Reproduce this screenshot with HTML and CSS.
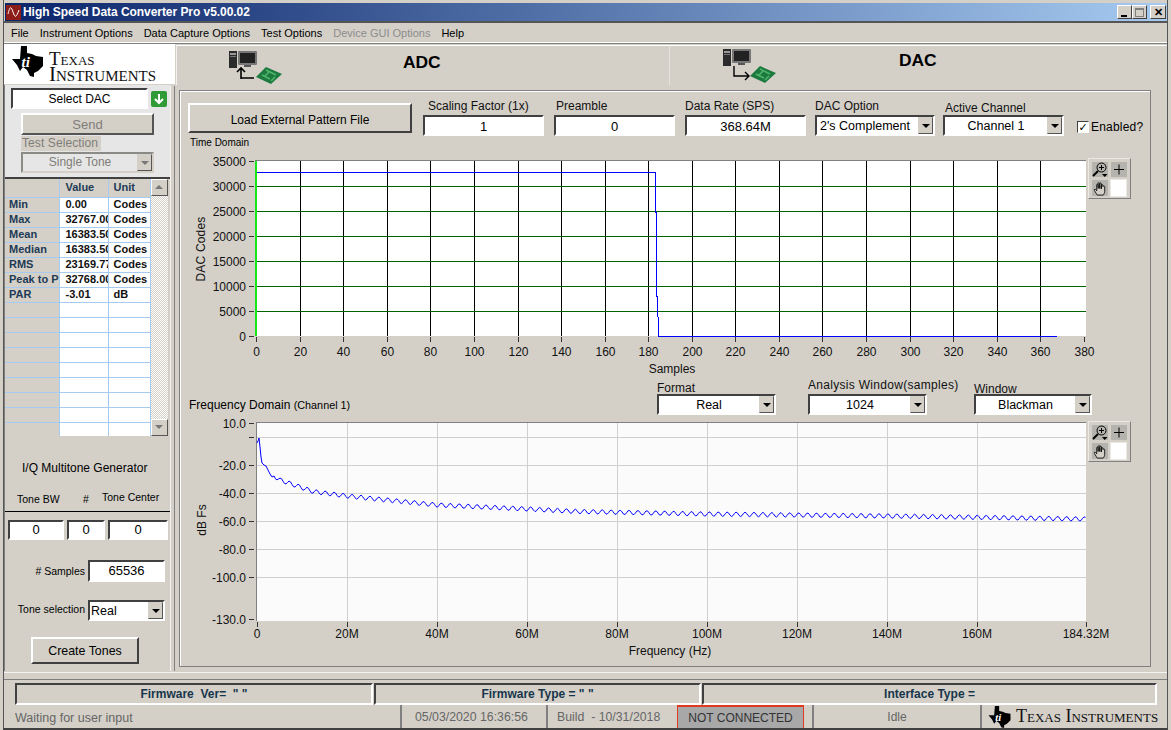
FILE: index.html
```html
<!DOCTYPE html>
<html lang="en">

<head>
    <meta charset="UTF-8">
    <title>High Speed Data Converter Pro v5.00.02</title>
    <link rel="stylesheet" href="styles.css">
</head>

<body>
    <svg class="iconDefs" width="0" height="0">
        <symbol id="tiState" viewBox="0 0 31 31">
            <path d="M9 0 L15 0 L15 7 L20 8 L24 10 L31 11 L31 20 L26 25 L22 27 L22 31 L18 30 L15 24 L11 21 L8 25 L5 19 L0 13 L8 13 Z" />
            <text class="tiMark" x="9.5" y="21">ti</text>
        </symbol>
        <symbol id="zoomIcon" viewBox="0 0 16 15">
            <circle cx="9.5" cy="5.5" r="4.5" fill="none" stroke="#000" />
            <path d="M9.5 3 V8 M7 5.5 H12" stroke="#000" />
            <path d="M6 9 L1 14" stroke="#000" stroke-width="2" />
            <path d="M10 12 H15.5 L12.7 15 Z" fill="#000" />
        </symbol>
        <symbol id="plusIcon" viewBox="0 0 16 15">
            <path d="M8 2.5 V12.5 M3 7.5 H13" stroke="#000" fill="none" />
        </symbol>
        <symbol id="handIcon" viewBox="0 0 14 16">
            <path d="M4 15 C3 13 0.5 10 1 9 C1.7 8.3 3 9.5 3.5 10.5 L3.5 4 C3.5 3 5 3 5 4 L5 8 L5 2.5 C5 1.5 6.7 1.5 6.7 2.5 L6.7 8 L6.7 3 C6.7 2 8.4 2 8.4 3 L8.4 8.5 L8.4 4.5 C8.4 3.5 10 3.5 10 4.5 L10 6 C10 5 12 5 12 6 L12 11 C12 13 11 14 10.5 15 Z" fill="#d4d0c8" stroke="#000" stroke-width="0.9" />
        </symbol>
        <symbol id="pcIcon" viewBox="0 0 28 17">
            <rect x="0" y="0" width="8" height="17" fill="#2b2b2b" />
            <rect x="1" y="2" width="6" height="2" fill="#999" />
            <rect x="1" y="5" width="6" height="1" fill="#777" />
            <rect x="9" y="0" width="19" height="14" rx="1" fill="#777" />
            <rect x="11" y="2" width="15" height="10" fill="#222" />
            <rect x="15" y="14" width="7" height="2" fill="#555" />
        </symbol>
        <symbol id="boardIcon" viewBox="0 0 26 17">
            <path d="M10 0 L26 7 L15 17 L0 10 Z" fill="#1c7a3e" />
            <path d="M10 3 L20 8 M6 8 L14 12 M13 5 L8 10 M19 10 L15 14" stroke="#4fb56c" stroke-width="1.5" />
        </symbol>
    </svg>

    <div class="window">
        <div class="titleBar">
            <svg class="appIcon" viewBox="0 0 15 15">
                <rect width="15" height="15" fill="#8c1d18" />
                <path d="M2 9 C4 1 5 1 7 7 C9 13 10 13 13 5" fill="none" stroke="#fff" />
            </svg>
            <span class="titleText">High Speed Data Converter Pro v5.00.02</span>
            <div class="winButtons">
                <button class="winBtn"><span class="minGlyph"></span></button>
                <button class="winBtn"><span class="maxGlyph"></span></button>
                <button class="winBtn closeBtn">&#10005;</button>
            </div>
        </div>

        <div class="menuBar">
            <span>File</span>
            <span>Instrument Options</span>
            <span>Data Capture Options</span>
            <span>Test Options</span>
            <span class="disabled">Device GUI Options</span>
            <span>Help</span>
        </div>

        <div class="headerRow">
            <div class="logoBox">
                <svg class="logoState"><use href="#tiState" /></svg>
                <div class="logoText">
                    <div class="logoTexas">Texas</div>
                    <div class="logoInst">Instruments</div>
                </div>
            </div>
            <div class="tab adcTab">
                <div class="tabIcon">
                    <svg class="pc" viewBox="0 0 28 17"><use href="#pcIcon" /></svg>
                    <svg class="tabArrow" viewBox="0 0 20 13">
                        <path d="M5 12 V2 M1 5 L5 1 L9 5 M5 11 H18" fill="none" stroke="#000" stroke-width="1.6" />
                    </svg>
                    <svg class="board" viewBox="0 0 26 17"><use href="#boardIcon" /></svg>
                </div>
                <span class="tabLabel">ADC</span>
            </div>
            <div class="tab dacTab">
                <div class="tabIcon">
                    <svg class="pc" viewBox="0 0 28 17"><use href="#pcIcon" /></svg>
                    <svg class="tabArrow" viewBox="0 0 20 13">
                        <path d="M2 0 V10 H17 M13 6 L17 10 L13 14" fill="none" stroke="#000" stroke-width="1.4" />
                    </svg>
                    <svg class="board" viewBox="0 0 26 17"><use href="#boardIcon" /></svg>
                </div>
                <span class="tabLabel">DAC</span>
            </div>
        </div>

        <div class="mainRow">
            <div class="sideBar">
                <div class="sideTop">
                    <div class="selectDacRow">
                        <div class="field selectDac">Select DAC</div>
                        <svg class="goIcon" viewBox="0 0 16 16">
                            <rect width="16" height="16" rx="2" fill="#2f9a36" />
                            <path d="M8 3 V12 M4 8 L8 12 L12 8" fill="none" stroke="#fff" stroke-width="2" />
                        </svg>
                    </div>
                    <button class="btn sendBtn">Send</button>
                    <div class="testLabel">Test Selection</div>
                    <div class="select greyed">
                        <span class="selectValue">Single Tone</span>
                        <span class="selectArrow"></span>
                    </div>
                </div>

                <div class="statsBox">
                    <table class="stats">
                        <colgroup>
                            <col class="colName">
                            <col class="colValue">
                            <col class="colUnit">
                        </colgroup>
                        <tr class="headRow"><th></th><th>Value</th><th>Unit</th></tr>
                        <tr><th>Min</th><td>0.00</td><td>Codes</td></tr>
                        <tr><th>Max</th><td>32767.00</td><td>Codes</td></tr>
                        <tr><th>Mean</th><td>16383.50</td><td>Codes</td></tr>
                        <tr><th>Median</th><td>16383.50</td><td>Codes</td></tr>
                        <tr><th>RMS</th><td>23169.77</td><td>Codes</td></tr>
                        <tr><th>Peak to P</th><td>32768.00</td><td>Codes</td></tr>
                        <tr><th>PAR</th><td>-3.01</td><td>dB</td></tr>
                        <tr><th></th><td></td><td></td></tr>
                        <tr><th></th><td></td><td></td></tr>
                        <tr><th></th><td></td><td></td></tr>
                        <tr><th></th><td></td><td></td></tr>
                        <tr><th></th><td></td><td></td></tr>
                        <tr><th></th><td></td><td></td></tr>
                        <tr><th></th><td></td><td></td></tr>
                        <tr><th></th><td></td><td></td></tr>
                        <tr><th></th><td></td><td></td></tr>
                    </table>
                    <div class="scrollBar">
                        <span class="scrollBtn"><i class="upGlyph"></i></span>
                        <span class="scrollBtn"><i class="downGlyph"></i></span>
                    </div>
                </div>

                <div class="toneTitle">I/Q Multitone Generator</div>
                <div class="toneHeads">
                    <span class="toneBw">Tone BW</span>
                    <span class="toneNum">#</span>
                    <span class="toneCenter">Tone Center</span>
                </div>
                <div class="toneFields">
                    <div class="field toneF1">0</div>
                    <div class="field toneF2">0</div>
                    <div class="field toneF3">0</div>
                </div>
                <div class="toneRow samplesRow">
                    <span class="toneRowLabel">#&nbsp;Samples</span>
                    <div class="field toneInput">65536</div>
                </div>
                <div class="toneRow selectionRow">
                    <span class="toneRowLabel">Tone selection</span>
                    <div class="select toneInput">
                        <span class="selectValue alignLeft">Real</span>
                        <span class="selectArrow"></span>
                    </div>
                </div>
                <button class="btn createBtn">Create Tones</button>
            </div>

            <div class="splitter"></div>

            <div class="panel">
                <div class="controlRow">
                    <button class="btn loadBtn">Load External Pattern File</button>
                    <div class="ctl ctlScale">
                        <label>Scaling Factor (1x)</label>
                        <div class="field">1</div>
                    </div>
                    <div class="ctl ctlPre">
                        <label>Preamble</label>
                        <div class="field">0</div>
                    </div>
                    <div class="ctl ctlRate">
                        <label>Data Rate (SPS)</label>
                        <div class="field">368.64M</div>
                    </div>
                    <div class="ctl ctlOption">
                        <label>DAC Option</label>
                        <div class="select">
                            <span class="selectValue alignLeft">2's Complement</span>
                            <span class="selectArrow"></span>
                        </div>
                    </div>
                    <div class="ctl ctlChannel">
                        <label>Active Channel</label>
                        <div class="select">
                            <span class="selectValue">Channel 1</span>
                            <span class="selectArrow"></span>
                        </div>
                    </div>
                    <div class="enabledBox">
                        <span class="checkBox">&#10003;</span>
                        <span class="enabledText">Enabled?</span>
                    </div>
                </div>

                <div class="timeLabel">Time Domain</div>
                <div class="chartWrap">
                    <svg id="timeChart" class="chart" viewBox="186 150 960 232" width="960" height="232"></svg>
                    <div class="palette timePalette">
                        <span class="palBtn"><svg><use href="#zoomIcon" /></svg></span>
                        <span class="palBtn palOn"><svg><use href="#plusIcon" /></svg></span>
                        <span class="palBtn"><svg><use href="#handIcon" /></svg></span>
                        <span class="palBlank"></span>
                    </div>
                </div>

                <div class="freqRow">
                    <div class="freqTitle">Frequency Domain <small>(Channel 1)</small></div>
                    <div class="ctl ctlFormat">
                        <label>Format</label>
                        <div class="select">
                            <span class="selectValue">Real</span>
                            <span class="selectArrow"></span>
                        </div>
                    </div>
                    <div class="ctl ctlAnalysis">
                        <label>Analysis Window(samples)</label>
                        <div class="select">
                            <span class="selectValue">1024</span>
                            <span class="selectArrow"></span>
                        </div>
                    </div>
                    <div class="ctl ctlWindow">
                        <label>Window</label>
                        <div class="select">
                            <span class="selectValue">Blackman</span>
                            <span class="selectArrow"></span>
                        </div>
                    </div>
                </div>

                <div class="chartWrap">
                    <svg id="freqChart" class="chart" viewBox="186 415 960 250" width="960" height="250"></svg>
                    <div class="palette freqPalette">
                        <span class="palBtn"><svg><use href="#zoomIcon" /></svg></span>
                        <span class="palBtn palOn"><svg><use href="#plusIcon" /></svg></span>
                        <span class="palBtn"><svg><use href="#handIcon" /></svg></span>
                        <span class="palBlank"></span>
                    </div>
                </div>
            </div>
        </div>

        <div class="hSplitter"></div>

        <div class="firmwareRow">
            <div class="fwBox fw1">Firmware&nbsp; Ver=&nbsp; " "</div>
            <div class="fwBox fw2">Firmware Type = " "</div>
            <div class="fwBox fw3">Interface Type =</div>
        </div>

        <div class="statusRow">
            <span class="stWait">Waiting for user input</span>
            <span class="stCell stDate">05/03/2020 16:36:56</span>
            <span class="stCell stBuild">Build&nbsp; - 10/31/2018</span>
            <span class="stConn">NOT CONNECTED</span>
            <span class="stCell stIdle">Idle</span>
            <span class="stCell stLogo">
                <svg class="logoSmall"><use href="#tiState" /></svg>
                <span class="logoLine">Texas Instruments</span>
            </span>
        </div>
    </div>

    <script src="chart.js"></script>
</body>

</html>
```

FILE: styles.css
```css
* {
    margin: 0;
    padding: 0;
    box-sizing: border-box;
    font-family: "Liberation Sans", Arial, sans-serif;
}

html,
body {
    width: 1171px;
    height: 730px;
    overflow: hidden;
    background-color: #d4d0c8;
}

.iconDefs {
    display: block;
    height: 0;
}

.tiMark {
    font: italic bold 15px "Liberation Serif", serif;
    fill: #fff;
}

.window {
    display: flex;
    flex-direction: column;
    width: 1165px;
    height: 730px;
    margin-left: 3px;
    padding-top: 3px;
    border-left: 1px solid #555;
    border-right: 1px solid #555;
    border-bottom: 2px solid #404040;
}

/* title bar */
.titleBar {
    display: flex;
    align-items: center;
    height: 18px;
    margin: 0 0 0 1px;
    padding: 0 1px 0 1px;
    background: linear-gradient(to right, #0a246a, #a6caf0);
    flex: none;
}

.appIcon {
    width: 15px;
    height: 15px;
    margin-right: 2px;
}

.titleText {
    color: #fff;
    font-size: 12px;
    font-weight: bold;
    letter-spacing: -0.05px;
}

.winButtons {
    display: flex;
    margin-left: auto;
}

.winBtn {
    display: flex;
    align-items: center;
    justify-content: center;
    width: 15px;
    height: 14px;
    border: 1px solid;
    border-color: #fff #404040 #404040 #fff;
    background-color: #d4d0c8;
    font-size: 11px;
    font-weight: bold;
    color: #000;
}

.closeBtn {
    width: 16px;
    margin-left: 3px;
}

.minGlyph {
    width: 6px;
    height: 2px;
    margin-top: 7px;
    margin-right: 2px;
    background-color: #000;
}

.maxGlyph {
    width: 9px;
    height: 9px;
    border: 1px solid #808080;
    border-top-width: 2px;
}

.menuBar {
    display: flex;
    align-items: center;
    flex: none;
    gap: 11px;
    height: 22px;
    padding-left: 7px;
    border-top: 2px solid #555;
    border-bottom: 1px solid #fff;
}

.menuBar span {
    font-size: 11px;
    color: #000;
}

.menuBar .disabled {
    color: #8c8c8c;
}

/* logo + tabs */
.headerRow {
    display: flex;
    flex: none;
    height: 42px;
    border-top: 1px solid #808080;
}

.logoBox {
    display: flex;
    width: 171px;
    height: 40px;
    margin-right: 1px;
    padding: 2px 0 0 8px;
    background-color: #fff;
}

.logoState {
    width: 31px;
    height: 31px;
    fill: #000;
}

.logoText {
    margin: 5px 0 0 6px;
    color: #111;
}

.logoTexas,
.logoInst {
    height: 15px;
    line-height: 15px;
    font-family: "Liberation Serif", serif;
    font-variant: small-caps;
    white-space: nowrap;
}

.logoTexas {
    height: 16px;
    font-size: 19px;
}

.logoInst {
    font-size: 21px;
}

.tab {
    display: flex;
    height: 40px;
    margin-top: 1px;
    border-top: 1px solid #fff;
}

.adcTab {
    width: 494px;
    border-right: 1px solid #e6e4df;
    border-left: 1px solid #f2f1ee;
}

.dacTab {
    flex: 1;
}

.tabIcon {
    position: relative;
    flex: none;
    width: 55px;
    height: 38px;
}

.adcTab .tabIcon {
    margin-left: 52px;
}

.dacTab .tabIcon {
    margin-left: 53px;
}

.tabIcon svg {
    position: absolute;
}

.pc {
    width: 28px;
    height: 17px;
}

.adcTab .pc {
    left: 0;
    top: 5px;
}

.dacTab .pc {
    left: 0;
    top: 3px;
}

.tabArrow {
    width: 20px;
    height: 13px;
    overflow: visible;
}

.adcTab .tabArrow {
    left: 7px;
    top: 21px;
}

.dacTab .tabArrow {
    left: 9px;
    top: 20px;
}

.board {
    width: 26px;
    height: 17px;
}

.adcTab .board {
    left: 27px;
    top: 21px;
}

.dacTab .board {
    left: 27px;
    top: 20px;
}

.tabLabel {
    font-size: 17.4px;
    font-weight: bold;
    color: #000;
}

.adcTab .tabLabel {
    margin: 6px 0 0 119px;
}

.dacTab .tabLabel {
    margin: 4px 0 0 121px;
}

/* main area */
.mainRow {
    display: flex;
    flex: none;
    height: 586px;
}

.sideBar {
    display: flex;
    flex-direction: column;
    width: 166px;
    flex: none;
    border-left: 1px solid #808080;
}

.sideTop {
    display: flex;
    flex-direction: column;
    height: 94px;
    padding: 3px 0 0 6px;
    background-color: #e6e6e6;
    border-bottom: 2px solid #404040;
}

.selectDacRow {
    display: flex;
    align-items: center;
    gap: 3px;
}

.field {
    height: 21px;
    line-height: 19px;
    border: 2px solid;
    border-color: #404040 #fff #fff #404040;
    background-color: #fff;
    text-align: center;
    font-size: 13px;
    color: #000;
}

.selectDac {
    width: 137px;
    line-height: 18px;
    font-size: 12px;
}

.goIcon {
    width: 16px;
    height: 16px;
}

.btn {
    border: 2px solid;
    border-color: #fff #555 #555 #fff;
    background-color: #d4d0c8;
    font-size: 12px;
    color: #000;
}

.sendBtn {
    width: 133px;
    height: 22px;
    margin: 4px 0 0 10px;
    color: #807d78;
    font-size: 13px;
}

.testLabel {
    width: 80px;
    height: 15px;
    margin: 1px 0 0 10px;
    padding-left: 1px;
    background-color: #d4d0c8;
    color: #807d78;
    font-size: 12px;
    line-height: 15px;
    letter-spacing: 0.1px;
}

.select {
    display: flex;
    align-items: stretch;
    height: 21px;
    border: 2px solid;
    border-color: #404040 #fff #fff #404040;
    background-color: #fff;
    font-size: 12.5px;
    color: #000;
}

.selectValue {
    flex: 1;
    text-align: center;
    line-height: 19px;
    white-space: nowrap;
    overflow: hidden;
}

.alignLeft {
    text-align: left;
    padding-left: 1px;
}

.ctlOption .alignLeft {
    padding-left: 3px;
}

.selectArrow {
    position: relative;
    flex: none;
    width: 15px;
    background-color: #d4d0c8;
    border: 1px solid;
    border-color: #d4d0c8 #555 #555 #d4d0c8;
}

.selectArrow::after {
    content: "";
    position: absolute;
    left: 3px;
    top: 6px;
    border: 4px solid transparent;
    border-top: 4px solid #000;
    border-bottom: none;
}

.greyed {
    width: 133px;
    margin: 1px 0 0 10px;
    border-color: #8a8a86 #d4d0c8 #d4d0c8 #8a8a86;
    background-color: #e6e6e6;
    color: #807d78;
    font-size: 12px;
}

.greyed .selectValue {
    line-height: 16px;
}

.greyed .selectArrow::after {
    border-top-color: #777;
}

/* stats table */
.statsBox {
    display: flex;
    height: 257px;
    width: 163px;
    flex: none;
    overflow: hidden;
}

.stats {
    width: 146px;
    height: 257px;
    table-layout: fixed;
    border-collapse: collapse;
    font-size: 11px;
}

.colName {
    width: 54px;
}

.colValue {
    width: 49px;
}

.stats tr {
    height: 15px;
}

.stats .headRow {
    height: 18px;
}

.stats th,
.stats td {
    height: 15px;
    padding: 0 0 0 4px;
    overflow: hidden;
    white-space: nowrap;
    text-align: left;
    border-right: 1px solid #a6caf0;
    border-bottom: 1px solid #a6caf0;
    line-height: 13px;
}

.stats th {
    background-color: #d4d0c8;
    color: #1d3a56;
    font-weight: bold;
}

.stats td {
    background-color: #fff;
    font-weight: bold;
    color: #111;
}

.stats th:nth-child(2),
.stats td:nth-child(2) {
    padding-left: 6px;
}

.stats th:nth-child(3),
.stats td:nth-child(3) {
    padding-left: 5px;
}

.scrollBar {
    display: flex;
    flex-direction: column;
    justify-content: space-between;
    width: 17px;
    background: repeating-conic-gradient(#d4d0c8 0 25%, #fff 0 50%) 0 0 / 2px 2px;
}

.scrollBtn {
    position: relative;
    display: block;
    height: 17px;
    background-color: #d4d0c8;
    border: 1px solid;
    border-color: #fff #555 #555 #fff;
}

.upGlyph,
.downGlyph {
    position: absolute;
    left: 3px;
    top: 5px;
    border: 4px solid transparent;
    border-top: none;
    border-bottom: 4px solid #777;
}

.downGlyph {
    border-bottom: none;
    border-top: 4px solid #777;
}

/* tone generator */
.toneTitle {
    margin: 24px 0 0 17px;
    font-size: 12px;
    line-height: 16px;
}

.toneHeads {
    position: relative;
    height: 36px;
    border-bottom: 1px solid #000;
    font-size: 10.5px;
}

.toneHeads span {
    position: absolute;
    top: 17px;
}

.toneBw {
    left: 12px;
}

.toneNum {
    left: 78px;
}

.toneHeads .toneCenter {
    left: 97px;
    top: 15px;
}

.toneFields {
    display: flex;
    gap: 3px;
    margin: 8px 0 0 3px;
}

.toneFields .field {
    height: 20px;
    line-height: 16px;
}

.toneF1 {
    width: 56px;
}

.toneF2 {
    width: 38px;
}

.toneF3 {
    width: 60px;
}

.toneRow {
    display: flex;
    align-items: center;
    justify-content: flex-end;
    gap: 3px;
    width: 160px;
}

.toneRowLabel {
    font-size: 10.5px;
}

.toneInput {
    width: 77px;
}

.samplesRow {
    margin-top: 20px;
}

.samplesRow .toneInput {
    height: 22px;
    line-height: 18px;
}

.selectionRow {
    margin-top: 18px;
}

.selectionRow .toneRowLabel {
    margin-bottom: 4px;
}

.createBtn {
    width: 108px;
    height: 27px;
    margin: 16px 0 0 26px;
    border-color: #fff #404040 #404040 #fff;
    font-size: 12.4px;
}

.splitter {
    flex: none;
    width: 5px;
    height: 585px;
    margin-top: 1px;
    border-left: 1px solid #f4f4f0;
    border-right: 1px solid #808080;
}

.panel {
    position: relative;
    width: 972px;
    height: 577px;
    margin: 5px 0 0 4px;
    padding: 12px 0 0 6px;
    border: 1px solid #808080;
    box-shadow: inset 1px 1px 0 #fff;
}

.controlRow {
    display: flex;
    align-items: flex-end;
    height: 33px;
}

.loadBtn {
    width: 224px;
    height: 30px;
    margin: 0 0 3px 2px;
    padding-top: 3px;
    border-color: #fff #404040 #404040 #fff;
}

.ctl {
    flex: none;
}

.ctl label {
    display: block;
    font-size: 12px;
    line-height: 12px;
    color: #111;
    white-space: nowrap;
}

.ctl .field,
.ctl .select {
    margin-top: 3px;
}

.ctlScale {
    width: 121px;
    margin-left: 11px;
}

.ctlScale label {
    padding-left: 5px;
}

.ctlPre {
    width: 121px;
    margin-left: 10px;
}

.ctlPre label {
    padding-left: 2px;
}

.ctlRate {
    width: 121px;
    margin-left: 10px;
}

.ctlOption {
    width: 120px;
    margin-left: 9px;
}

.ctlChannel {
    width: 121px;
    margin-left: 8px;
}

.ctlChannel label {
    padding-left: 2px;
}

.ctlChannel .select {
    margin-top: 1px;
}

.enabledBox {
    display: flex;
    align-items: center;
    gap: 2px;
    margin: 0 0 2px 13px;
    font-size: 12px;
}

.enabledText {
    letter-spacing: 0.2px;
}

.checkBox {
    display: flex;
    align-items: center;
    justify-content: center;
    width: 12px;
    height: 12px;
    border: 1px solid;
    border-color: #404040 #fff #fff #404040;
    background-color: #fff;
    font-size: 11px;
    font-family: "DejaVu Sans", sans-serif;
    font-weight: bold;
}

.timeLabel {
    height: 14px;
    padding: 1px 0 0 4px;
    font-size: 10px;
    line-height: 12px;
}

.chartWrap {
    position: relative;
}

.chart {
    display: block;
}

.chart text {
    font-family: "Liberation Sans", Arial, sans-serif;
    font-size: 12px;
    fill: #111;
}

.palette {
    position: absolute;
    display: grid;
    grid-template-columns: 16px 16px;
    grid-template-rows: 15px 16px;
    gap: 3px;
    width: 43px;
    height: 41px;
    padding: 3px;
    border: 1px solid;
    border-color: #ebe9e4 #808080 #808080 #ebe9e4;
    background-color: #d4d0c8;
}

.timePalette {
    left: 902px;
    top: 8px;
}

.freqPalette {
    left: 902px;
    top: 6px;
}

.palBtn {
    display: flex;
    align-items: center;
    justify-content: center;
    background-color: #b5b3ad;
}

.palBtn svg {
    width: 16px;
    height: 15px;
}

.palBlank {
    margin: -1px 0 -1px -1px;
    background-color: #fff;
    border: 1px solid #ebe9e4;
}

.freqRow {
    display: flex;
    align-items: flex-end;
    height: 33px;
}

.freqTitle {
    width: 470px;
    margin-bottom: 2px;
    padding-left: 3px;
    font-size: 12px;
    line-height: 16px;
}

.freqTitle small {
    font-size: 10.8px;
}

.ctlFormat {
    width: 119px;
    margin-left: 1px;
}

.ctlFormat .select {
    margin-top: 0;
}

.ctlAnalysis {
    width: 119px;
    margin-left: 32px;
}

.ctlAnalysis label {
    letter-spacing: 0.3px;
}

.ctlWindow {
    width: 118px;
    margin-left: 47px;
}

.ctlWindow .select {
    margin-top: -1px;
}

/* bottom */
.hSplitter {
    flex: none;
    width: 1163px;
    height: 8px;
    margin-top: 1px;
    border-top: 1px solid #f4f4f0;
    border-bottom: 1px solid #808080;
}

.firmwareRow {
    display: flex;
    flex: none;
    gap: 1px;
    height: 22px;
    margin: 3px 0 0 11px;
}

.fwBox {
    display: flex;
    align-items: center;
    justify-content: center;
    border: 2px solid;
    border-color: #404040 #fff #fff #404040;
    font-size: 12px;
    font-weight: bold;
    color: #17364c;
    white-space: nowrap;
}

.fw1 {
    width: 358px;
}

.fw2 {
    width: 327px;
}

.fw3 {
    width: 455px;
}

.statusRow {
    display: flex;
    align-items: stretch;
    flex: 1;
    font-size: 12px;
    color: #666;
}

.stWait {
    width: 396px;
    padding: 6px 0 0 11px;
    font-size: 12.5px;
}

.stCell {
    display: flex;
    align-items: center;
    border-left: 2px solid;
    border-image: linear-gradient(to right, #808080 50%, #fff 50%) 1;
}

.stDate {
    width: 146px;
    padding-left: 13px;
    font-size: 12.3px;
}

.stBuild {
    width: 131px;
    padding-left: 9px;
    font-size: 12.3px;
}

.stConn {
    display: flex;
    align-items: center;
    justify-content: center;
    width: 127px;
    background-color: #a8a8a8;
    border-top: 2px solid #e03a20;
    border-left: 1px solid #e03a20;
    border-right: 1px solid #e03a20;
    color: #333;
}

.stIdle {
    width: 168px;
    margin-left: 8px;
    justify-content: center;
}

.stLogo {
    flex: 1;
    padding-left: 6px;
}

.logoSmall {
    width: 23px;
    height: 22px;
    fill: #000;
}

.logoLine {
    margin-left: 5px;
    font-family: "Liberation Serif", serif;
    font-variant: small-caps;
    font-size: 18px;
    color: #111;
    white-space: nowrap;
}
```

FILE: chart.js
```js
const svgNS = "http://www.w3.org/2000/svg";

function add(svg, tag, attrs, text) {
    const el = document.createElementNS(svgNS, tag);
    for (const key in attrs) el.setAttribute(key, attrs[key]);
    if (text !== undefined) el.textContent = text;
    svg.appendChild(el);
    return el;
}

function line(svg, x1, y1, x2, y2, color, width) {
    add(svg, "line", {
        x1, y1, x2, y2,
        stroke: color,
        "stroke-width": width || 1,
        "shape-rendering": "crispEdges"
    });
}

// time domain
const time = document.getElementById("timeChart");
const tx = v => Math.floor(256.7 + v * 2.178) + 0.5;
const ty = v => Math.round(336 - v / 200) + 0.5;

add(time, "rect", { x: 256, y: 161, width: 830, height: 175, fill: "#fff" });

for (let v = 20; v <= 360; v += 20) line(time, tx(v), 161, tx(v), 336, "#000");
for (let v = 5000; v <= 30000; v += 5000) line(time, 256, ty(v), 1086, ty(v), "#006400");
line(time, 255, 160.5, 1086, 160.5, "#808080");

add(time, "polyline", {
    points: "257,172.5 655.5,172.5 655.5,212 656.5,212 656.5,296 657.5,296 658.5,336.5 1057,336.5",
    fill: "none",
    stroke: "#0000ff",
    "shape-rendering": "crispEdges"
});
add(time, "rect", { x: 255, y: 161, width: 2, height: 175, fill: "#19e619" });

for (let v = 0; v <= 380; v += 20) {
    line(time, tx(v), 337, tx(v), 342, "#333");
    add(time, "text", { x: tx(v), y: 356, "text-anchor": "middle" }, v);
}
for (let v = 0; v <= 35000; v += 5000) {
    line(time, 249, ty(v), 254, ty(v), "#333");
    add(time, "text", { x: 246, y: ty(v) + 4, "text-anchor": "end" }, v);
}
add(time, "text", { x: 672, y: 373, "text-anchor": "middle" }, "Samples");
add(time, "text", { x: 205, y: 249, "text-anchor": "middle", transform: "rotate(-90 205 249)", "letter-spacing": "0.2" }, "DAC Codes");

// frequency domain
const freq = document.getElementById("freqChart");
const fy = db => Math.round(437 - db * 1.4) + 0.5;
const gridFreq = [0, 20, 40, 60, 80, 100, 120, 140, 160];

add(freq, "rect", { x: 257, y: 423, width: 829, height: 198, fill: "#fbfbfb" });

gridFreq.forEach(m => {
    const x = 257 + m * 4.5;
    if (m > 0) line(freq, x + 0.5, 423, x + 0.5, 621, "#cfcfcf");
    line(freq, x + 0.5, 622, x + 0.5, 627, "#333");
    add(freq, "text", { x: x, y: 638, "text-anchor": "middle" }, m === 0 ? "0" : m + "M");
});
line(freq, 1086.5, 622, 1086.5, 627, "#333");
add(freq, "text", { x: 1086, y: 638, "text-anchor": "middle" }, "184.32M");

[0, -20, -40, -60, -80, -100].forEach(db => line(freq, 257, fy(db), 1086, fy(db), "#cfcfcf"));
line(freq, 256, 422.5, 1086, 422.5, "#808080");
line(freq, 256.5, 422, 256.5, 621, "#808080");

[10, 0, -20, -40, -60, -80, -100, -130].forEach(db => {
    line(freq, 249, fy(db), 254, fy(db), "#333");
    if (db !== 0) {
        add(freq, "text", { x: 246, y: fy(db) + 4, "text-anchor": "end" }, db.toFixed(1));
    }
});
add(freq, "text", { x: 670, y: 655, "text-anchor": "middle" }, "Frequency (Hz)");
add(freq, "text", { x: 206, y: 520, "text-anchor": "middle", transform: "rotate(-90 206 520)" }, "dB Fs");

// spectrum of the pattern: steep start, then a slow slope with a small ripple
const start = [[257, 443], [258, 441], [259, 438], [260, 447], [261, 457], [262, 463], [264, 465], [266, 466], [268, 470], [270, 474], [272, 477], [274, 476]];
const slope = [[274, 476], [280, 480], [313, 491.5], [347, 496], [437, 505], [527, 509], [577, 511.5], [707, 514], [887, 516], [1086, 519]];

function slopeAt(x) {
    for (let i = 1; i < slope.length; i++) {
        if (x <= slope[i][0]) {
            const [x0, y0] = slope[i - 1];
            const [x1, y1] = slope[i];
            return y0 + (y1 - y0) * (x - x0) / (x1 - x0);
        }
    }
    return 519;
}

const points = start.map(p => p.join(","));
for (let x = 275.5; x <= 1086; x += 1.5) {
    const y = slopeAt(x) + 2.2 * Math.sin((x - 274) * 2 * Math.PI / 8.93);
    points.push(x + "," + y.toFixed(1));
}
add(freq, "polyline", { points: points.join(" "), fill: "none", stroke: "#0000ff" });
```
